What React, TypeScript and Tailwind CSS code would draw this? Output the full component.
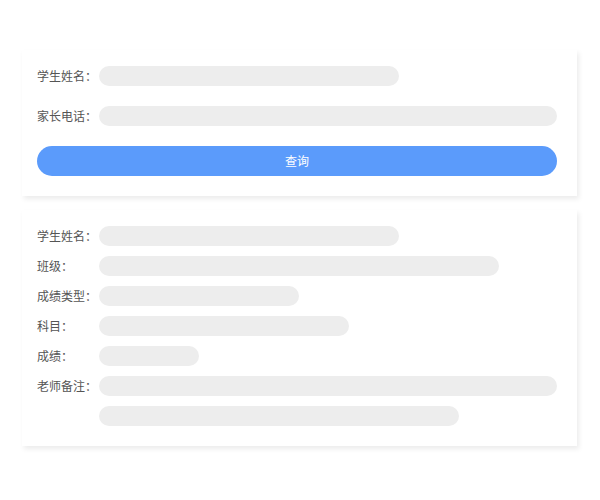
const FONT = { fontFamily: '"Noto Sans CJK SC", "Noto Sans", sans-serif' };

const resultRows: { label: string; width: number }[] = [
  { label: "学生姓名：", width: 300 },
  { label: "班级：", width: 400 },
  { label: "成绩类型：", width: 200 },
  { label: "科目：", width: 250 },
  { label: "成绩：", width: 100 },
  { label: "老师备注：", width: 458 },
  { label: "", width: 360 },
];

function Field({ label, width }: { label: string; width?: number }) {
  return (
    <div className="flex items-center h-5">
      <span className="w-[62px] shrink-0 text-xs leading-5 text-[#555]">{label}</span>
      {width ? (
        <div className="h-5 rounded-full bg-[#ededed]" style={{ width }} />
      ) : (
        <div className="h-5 flex-1 rounded-full bg-[#ededed]" />
      )}
    </div>
  );
}

export default function App() {
  return (
    <div className="min-h-[500px] w-[600px] bg-white pt-[50px]" style={FONT}>
      <div className="ml-[22px] w-[555px] bg-white pl-[15px] pr-[20px] pt-4 pb-5 shadow-[2px_3px_5px_rgba(0,0,0,0.08)]">
        <div className="flex flex-col gap-5">
          <Field label="学生姓名：" width={300} />
          <Field label="家长电话：" />
          <button className="h-[30px] w-full rounded-full bg-[#5b9bfb] text-xs text-white">查询</button>
        </div>
      </div>
      <div className="ml-[22px] mt-[14px] w-[555px] bg-white pl-[15px] pr-[20px] pt-4 pb-5 shadow-[2px_3px_5px_rgba(0,0,0,0.08)]">
        <div className="flex flex-col gap-[10px]">
          {resultRows.map((row, i) => (
            <Field key={i} label={row.label} width={row.width} />
          ))}
        </div>
      </div>
    </div>
  );
}
